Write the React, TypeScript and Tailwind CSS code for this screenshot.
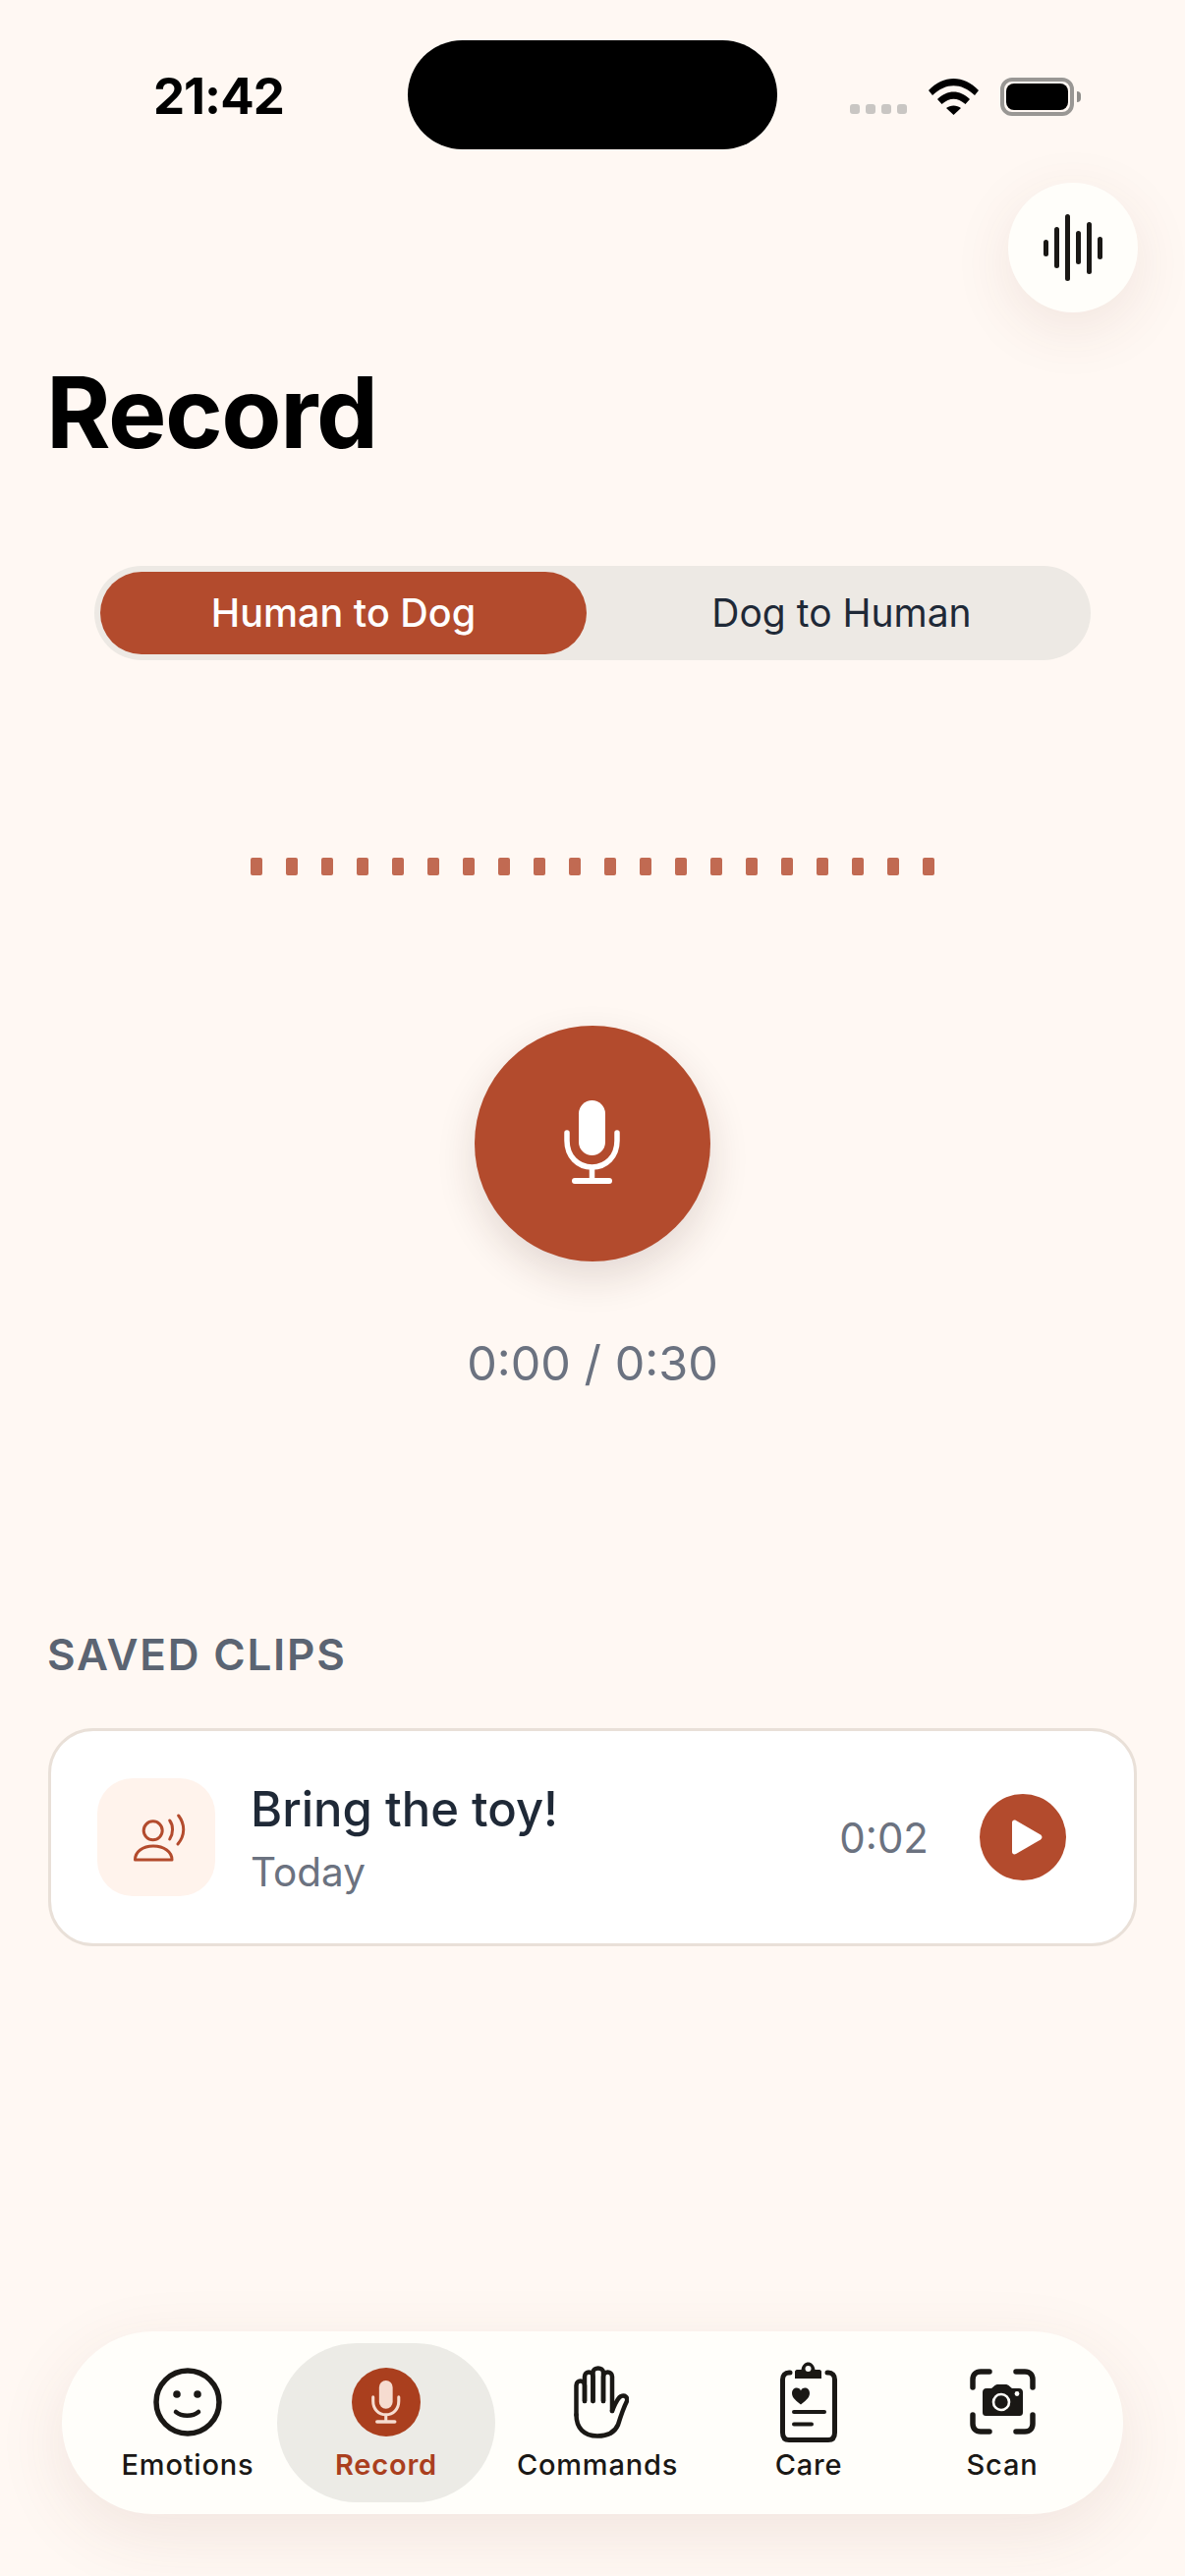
const BRAND = "#b34b2d";

function Wifi() {
  return (
    <svg width="51" height="37" viewBox="0 0 51 37" fill="#000">
      <path d="M0 12 C15 -4 36 -4 51 12 L47 17 C33 4 18 4 4 17 Z" />
      <path d="M9 21 C19 11 32 11 42 21 L37.500 26 C29 19 22 19 13.500 26 Z" />
      <path d="M18 30 C22 26.500 29 26.500 33 30 L25.500 37 Z" />
    </svg>
  );
}

function Waveform() {
  const bars = [
    [0, 26, 17],
    [11, 13, 42],
    [22, 0, 68],
    [33, 17, 34],
    [44, 8, 53],
    [55, 23, 23],
  ];
  return (
    <svg width="60" height="68" viewBox="0 0 60 68" fill="#1a1815">
      {bars.map(([x, y, h]) => (
        <rect key={x} x={x} y={y} width="5" height={h} rx="2.5" />
      ))}
    </svg>
  );
}

function Mic({ color = "#fff" }: { color?: string }) {
  return (
    <svg width="58" height="86" viewBox="0 0 58 86" fill="none">
      <rect x="15" y="0" width="27" height="56" rx="13.500" fill={color} />
      <path d="M3 33 V41 C3 57 14 68 28.500 68 C43 68 54 57 54 41 V33" stroke={color} strokeWidth="5.500" strokeLinecap="round" />
      <path d="M28.500 68 V82" stroke={color} strokeWidth="5.500" />
      <path d="M11 82 H46" stroke={color} strokeWidth="6" strokeLinecap="round" />
    </svg>
  );
}

function Person() {
  return (
    <svg width="56" height="52" viewBox="0 0 56 52" fill="none" stroke={BRAND} strokeWidth="3" strokeLinecap="round" strokeLinejoin="round" className="mt-[4px] ml-[5px]">
      <circle cx="21.700" cy="17.300" r="9.500" />
      <path d="M3.500 47 C3.500 39 11 33 22 33 C33 33 41 39 41 47 Z" />
      <path d="M38.700 7 C42.500 12 42.500 20 38.700 26" />
      <path d="M47.700 2 C54.500 11 54.500 22 47 31" />
    </svg>
  );
}

function Smile() {
  return (
    <svg width="70" height="70" viewBox="0 0 70 70" fill="none">
      <circle cx="35" cy="35" r="32" stroke="#1a1815" strokeWidth="5.500" />
      <circle cx="24" cy="27" r="3.800" fill="#1a1815" />
      <circle cx="45" cy="27" r="3.800" fill="#1a1815" />
      <path d="M23 45 C29 50 40 50 46 45" stroke="#1a1815" strokeWidth="4.500" strokeLinecap="round" />
    </svg>
  );
}

function HandIcon() {
  return (
    <svg width="56" height="74" viewBox="0 0 56 74" fill="none" stroke="#1a1815" strokeWidth="4.500" strokeLinecap="round" strokeLinejoin="round" className="ml-[7px]">
      <path d="M2.500 50 V20 C2.500 14 11 14 11 20 V36" />
      <path d="M11 36 V11 C11 5 19.500 5 19.500 11 V36" />
      <path d="M19.500 36 V7 C19.500 1 30 1 30 7 V36" />
      <path d="M30 36 V11 C30 5 39 5 39 11 V46" />
      <path d="M39 46 C42 39 44 33 48 31 C52 29.500 55 32 54 36 C50 44 47.500 52 45 60 C42 67 35 71.500 24 71.500 C10 71.500 2.500 63 2.500 50" />
    </svg>
  );
}

function Clipboard() {
  return (
    <svg width="58" height="82" viewBox="0 0 58 82" fill="none" stroke="#1a1815" strokeLinecap="round">
      <path d="M10 11 H9 C5 11 2.500 14 2.500 18 V72 C2.500 77 5 79.500 9 79.500 H49 C53 79.500 55.500 77 55.500 72 V18 C55.500 14 53 11 49 11 H48" strokeWidth="5" />
      <path d="M17 8 H21.500 C23 -2 34 -2 35.500 8 H40 C41 8 42 9 42 10 V17 H15 V10 C15 9 16 8 17 8 Z" fill="#1a1815" stroke="none" />
      <circle cx="28.500" cy="7" r="3" fill="#fffefa" stroke="none" />
      <path d="M12 32 C12 25 20 25 21 29.500 C22 25 30 25 30 32 C30 37 25 40 21 43.500 C17 40 12 37 12 32 Z" fill="#1a1815" stroke="none" />
      <path d="M14 51 H45" strokeWidth="4" />
      <path d="M14 63.500 H32" strokeWidth="4" />
    </svg>
  );
}

function ScanCam() {
  return (
    <svg width="67" height="67" viewBox="0 0 67 67" fill="none" stroke="#1a1815" strokeLinecap="round">
      <path d="M3 19 V11 C3 6 6 3 11 3 H20" strokeWidth="5.500" />
      <path d="M47 3 H56 C61 3 64 6 64 11 V19" strokeWidth="5.500" />
      <path d="M3 47 V56 C3 61 6 64 11 64 H20" strokeWidth="5.500" />
      <path d="M47 64 H56 C61 64 64 61 64 56 V47" strokeWidth="5.500" />
      <path d="M17 20 H22 L25 17.500 C26 16.500 27 16 29 16 H36 C38 16 39 16.500 40 17.500 L43 20 H50 C53 20 54 22 54 24 V44 C54 47 53 48 50 48 H17 C14 48 13 47 13 44 V24 C13 22 14 20 17 20 Z" fill="#1a1815" stroke="none" />
      <circle cx="32" cy="34" r="8" stroke="#fffefa" strokeWidth="2.600" />
      <circle cx="48" cy="25.500" r="2.400" fill="#fffefa" stroke="none" />
    </svg>
  );
}

export default function App() {
  return (
    <div className="flex h-[2622px] w-[1206px] flex-col overflow-hidden bg-[#fff8f3] font-['Inter',sans-serif]">
      <div className="flex h-[152px] items-start pt-[41px] pl-[156px]">
        <div className="mt-[26px] w-[259px] text-[51px] leading-[62px] font-bold tracking-[-1px] text-black">21:42</div>
        <div className="h-[111px] w-[376px] rounded-[56px] bg-black" />
        <div className="mt-[38px] ml-[74px] flex h-[39px] items-start">
          <div className="mt-[27px] flex gap-[6px]">
            <div className="h-[10px] w-[10px] rounded-[3px] bg-[#c9c6c3]" />
            <div className="h-[10px] w-[10px] rounded-[3px] bg-[#c9c6c3]" />
            <div className="h-[10px] w-[10px] rounded-[3px] bg-[#c9c6c3]" />
            <div className="h-[10px] w-[10px] rounded-[3px] bg-[#c9c6c3]" />
          </div>
          <div className="mt-[1px] ml-[22px]"><Wifi /></div>
          <div className="ml-[22px] flex h-[39px] w-[75px] items-center justify-center rounded-[12px] border-[4px] border-[#999794]">
            <div className="h-[27px] w-[63px] rounded-[8px] bg-black" />
          </div>
          <div className="mt-[14px] ml-[3px] h-[11px] w-[4px] rounded-r-[4px] bg-[#8f8d8a]" />
        </div>
      </div>

      <div className="mt-[34px] mr-[48px] flex h-[132px] w-[132px] items-center justify-center self-end rounded-full bg-[#fffefa] shadow-[0_16px_60px_rgba(120,60,50,0.1)]">
        <Waveform />
      </div>

      <h1 className="mt-[42px] ml-[47px] text-[100px] leading-[120px] font-bold tracking-[-1.500px] text-black">Record</h1>

      <div className="mt-[96px] ml-[96px] flex h-[96px] w-[1014px] rounded-[48px] bg-[#ede9e4] p-[6px]">
        <div className="flex h-[84px] w-[495px] shrink-0 items-center justify-center rounded-[42px] bg-[#b34b2d] pt-[1px] text-[39.500px] font-medium text-white">Human to Dog</div>
        <div className="ml-[6px] flex h-[84px] w-[501px] shrink-0 items-center justify-center pt-[1px] pl-[6px] text-[39px] text-[#1f2937]">Dog to Human</div>
      </div>

      <div className="mt-[201px] ml-[255px] flex gap-[24px]">
        {Array.from({ length: 20 }, (_, i) => (
          <div key={i} className="h-[18px] w-[12px] rounded-[2px] bg-[#c16a52]" />
        ))}
      </div>

      <div className="mt-[153px] flex h-[240px] w-[240px] items-center justify-center self-center rounded-full bg-[#b34b2d] shadow-[0_16px_40px_rgba(60,30,20,0.14)]">
        <div className="-mt-[2px]"><Mic /></div>
      </div>

      <div className="mt-[74px] text-center text-[48.500px] leading-[60px] text-[#6b7280]">0:00 / 0:30</div>

      <div className="mt-[239px] ml-[48px] text-[44px] leading-[54px] font-semibold tracking-[1.800px] text-[#5b6472]">SAVED CLIPS</div>

      <div className="mt-[48px] ml-[49px] flex h-[222px] w-[1108px] items-center rounded-[46px] border-[3px] border-[#e9e0d8] bg-white pl-[47px]">
        <div className="flex h-[120px] w-[120px] items-center justify-center rounded-[36px] bg-[#fff3ec]">
          <Person />
        </div>
        <div className="ml-[36px] flex flex-1 flex-col pt-[3px]">
          <div className="text-[49px] leading-[58px] font-medium text-[#1f2937]">Bring the toy!</div>
          <div className="mt-[11px] text-[40.500px] leading-[48px] text-[#6b7280]">Today</div>
        </div>
        <div className="text-[42px] text-[#6b7280]">0:02</div>
        <div className="mr-[69px] ml-[52px] flex h-[88px] w-[88px] items-center justify-center rounded-full bg-[#b34b2d]">
          <svg width="32" height="36" viewBox="0 0 32 36" fill="#fff" className="ml-[7px]">
            <path d="M1 3 C1 1 3 0 5 1 L30 15.500 C32 17 32 19 30 20.500 L5 35 C3 36 1 35 1 33 Z" />
          </svg>
        </div>
      </div>

      <div className="mt-[392px] ml-[63px] flex h-[186px] w-[1080px] items-center rounded-[93px] bg-[#fffefa] pb-[3px] pl-[37px] shadow-[0_20px_70px_rgba(120,60,50,0.1)]">
        <div className="flex w-[182px] flex-col items-center">
          <div className="flex h-[84px] items-center"><Smile /></div>
          <div className="mt-[4px] text-[29px] leading-[36px] font-medium tracking-[0.800px] text-[#1a1815]">Emotions</div>
        </div>
        <div className="mt-[3px] flex h-[162px] w-[222px] flex-col items-center justify-center rounded-[81px] bg-[#ecebe6] pb-[3px]">
          <div className="flex h-[84px] items-center">
            <div className="flex h-[70px] w-[70px] items-center justify-center rounded-full bg-[#aa3f1e]">
              <svg width="30" height="44" viewBox="0 0 58 86" fill="none">
                <rect x="15" y="0" width="27" height="56" rx="13.500" fill="#f6dcd0" />
                <path d="M3 33 V41 C3 57 14 68 28.500 68 C43 68 54 57 54 41 V33" stroke="#f6dcd0" strokeWidth="6" strokeLinecap="round" />
                <path d="M28.500 68 V82" stroke="#f6dcd0" strokeWidth="6" />
                <path d="M11 82 H46" stroke="#f6dcd0" strokeWidth="7" strokeLinecap="round" />
              </svg>
            </div>
          </div>
          <div className="mt-[4px] text-[29px] leading-[36px] font-semibold tracking-[0.800px] text-[#aa3f1e]">Record</div>
        </div>
        <div className="flex w-[208px] flex-col items-center">
          <div className="flex h-[84px] items-center"><HandIcon /></div>
          <div className="mt-[4px] text-[29px] leading-[36px] font-medium tracking-[0.800px] text-[#1a1815]">Commands</div>
        </div>
        <div className="flex w-[222px] flex-col items-center">
          <div className="flex h-[84px] items-center"><Clipboard /></div>
          <div className="mt-[4px] text-[29px] leading-[36px] font-medium tracking-[0.800px] text-[#1a1815]">Care</div>
        </div>
        <div className="flex w-[172px] flex-col items-center">
          <div className="flex h-[84px] items-center"><ScanCam /></div>
          <div className="mt-[4px] text-[29px] leading-[36px] font-medium tracking-[0.800px] text-[#1a1815]">Scan</div>
        </div>
      </div>
    </div>
  );
}
